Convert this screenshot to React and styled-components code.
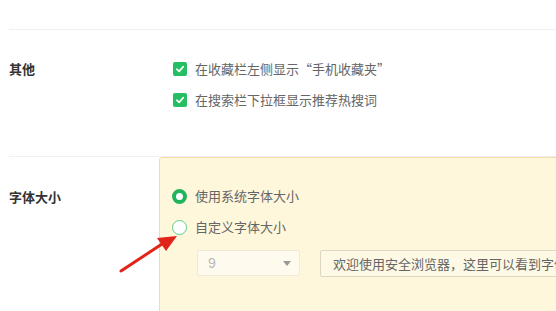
import React from 'react';
import styled, { createGlobalStyle } from 'styled-components';

const GlobalStyle = createGlobalStyle`
  html, body {
    margin: 0;
    padding: 0;
    background: #fff;
  }
  body {
    font-family: "Noto Sans CJK SC", "Noto Sans", sans-serif;
    width: 556px;
    height: 311px;
    overflow: hidden;
  }
`;

const Page = styled.div`
  position: relative;
  width: 556px;
  height: 311px;
  overflow: hidden;
  padding-left: 9px;
  box-sizing: border-box;
`;

const TopSpace = styled.div`
  height: 29px;
`;

const Section = styled.div`
  display: flex;
  border-top: 1px solid #f0f0f0;
  height: ${p => p.$height}px;
`;

const Label = styled.div`
  width: 150px;
  flex-shrink: 0;
  padding-top: ${p => p.$top}px;
  font-size: 13px;
  font-weight: bold;
  color: #333;
  line-height: 18px;
`;

const Options = styled.div`
  display: flex;
  flex-direction: column;
  gap: 13px;
  padding-top: 30px;
  padding-left: 14px;
`;

const Option = styled.label`
  display: flex;
  align-items: center;
  gap: 8px;
  font-size: 13px;
  color: #666;
  line-height: 18px;
  white-space: nowrap;
`;

const Check = styled.span`
  width: 14px;
  height: 14px;
  border-radius: 2px;
  background: #25be62;
  display: flex;
  align-items: center;
  justify-content: center;
`;

const Radio = styled.span`
  width: 15px;
  height: 15px;
  margin-left: -1px;
  border-radius: 50%;
  box-sizing: border-box;
  border: ${p => (p.$on ? '4.5px solid #21b45c' : '1.5px solid #5ccf8c')};
  background: #fff;
`;

const Panel = styled.div`
  width: 420px;
  flex-shrink: 0;
  height: 170px;
  box-sizing: border-box;
  background: #fef7dc;
  border: 1px solid #f1dea4;
  border-radius: 3px;
  padding: 29px 0 0 13px;
  display: flex;
  flex-direction: column;
  gap: 13px;
`;

const Controls = styled.div`
  display: flex;
  gap: 20px;
  margin-top: 1px;
  padding-left: 24px;
`;

const Select = styled.div`
  width: 103px;
  height: 26px;
  flex-shrink: 0;
  box-sizing: border-box;
  border: 1px solid #efe9d6;
  background: #fefbee;
  border-radius: 2px;
  display: flex;
  align-items: center;
  justify-content: space-between;
  padding: 0 8px 0 10px;
  font-family: "Liberation Sans", Arial, sans-serif;
  font-size: 14px;
  color: #b8b8b8;
`;

const Caret = styled.span`
  width: 0;
  height: 0;
  border-left: 4px solid transparent;
  border-right: 4px solid transparent;
  border-top: 5px solid #999;
`;

const Preview = styled.div`
  width: 300px;
  height: 27px;
  flex-shrink: 0;
  box-sizing: border-box;
  border: 1px solid #ddd6c0;
  background: #fef9e4;
  border-radius: 2px;
  padding: 0 12px;
  display: flex;
  align-items: center;
  font-size: 13px;
  color: #666;
  white-space: nowrap;
  overflow: hidden;
`;

const Arrow = styled.svg`
  position: absolute;
  left: 0;
  top: 0;
  pointer-events: none;
`;

const Tick = () => (
  <svg width="10" height="10" viewBox="0 0 10 10">
    <path d="M1.8 5.2 L4.1 7.4 L8.3 2.6" fill="none" stroke="#fff" strokeWidth="1.6" strokeLinecap="round" strokeLinejoin="round" />
  </svg>
);

export default function App() {
  return (
    <>
      <GlobalStyle />
      <Page>
        <TopSpace />
        <Section $height={126}>
          <Label $top={30}>其他</Label>
          <Options>
            <Option><Check><Tick /></Check>在收藏栏左侧显示“手机收藏夹”</Option>
            <Option><Check><Tick /></Check>在搜索栏下拉框显示推荐热搜词</Option>
          </Options>
        </Section>
        <Section $height={160}>
          <Label $top={31}>字体大小</Label>
          <Panel>
            <Option><Radio $on />使用系统字体大小</Option>
            <Option><Radio />自定义字体大小</Option>
            <Controls>
              <Select>9<Caret /></Select>
              <Preview>欢迎使用安全浏览器，这里可以看到字体改变效果</Preview>
            </Controls>
          </Panel>
        </Section>
        <Arrow width="556" height="311" viewBox="0 0 556 311">
          <line x1="121" y1="271" x2="162" y2="244" stroke="#e2231a" strokeWidth="3" strokeLinecap="round" />
          <polygon points="177,236 157,238 166,251" fill="#e2231a" />
        </Arrow>
      </Page>
    </>
  );
}
